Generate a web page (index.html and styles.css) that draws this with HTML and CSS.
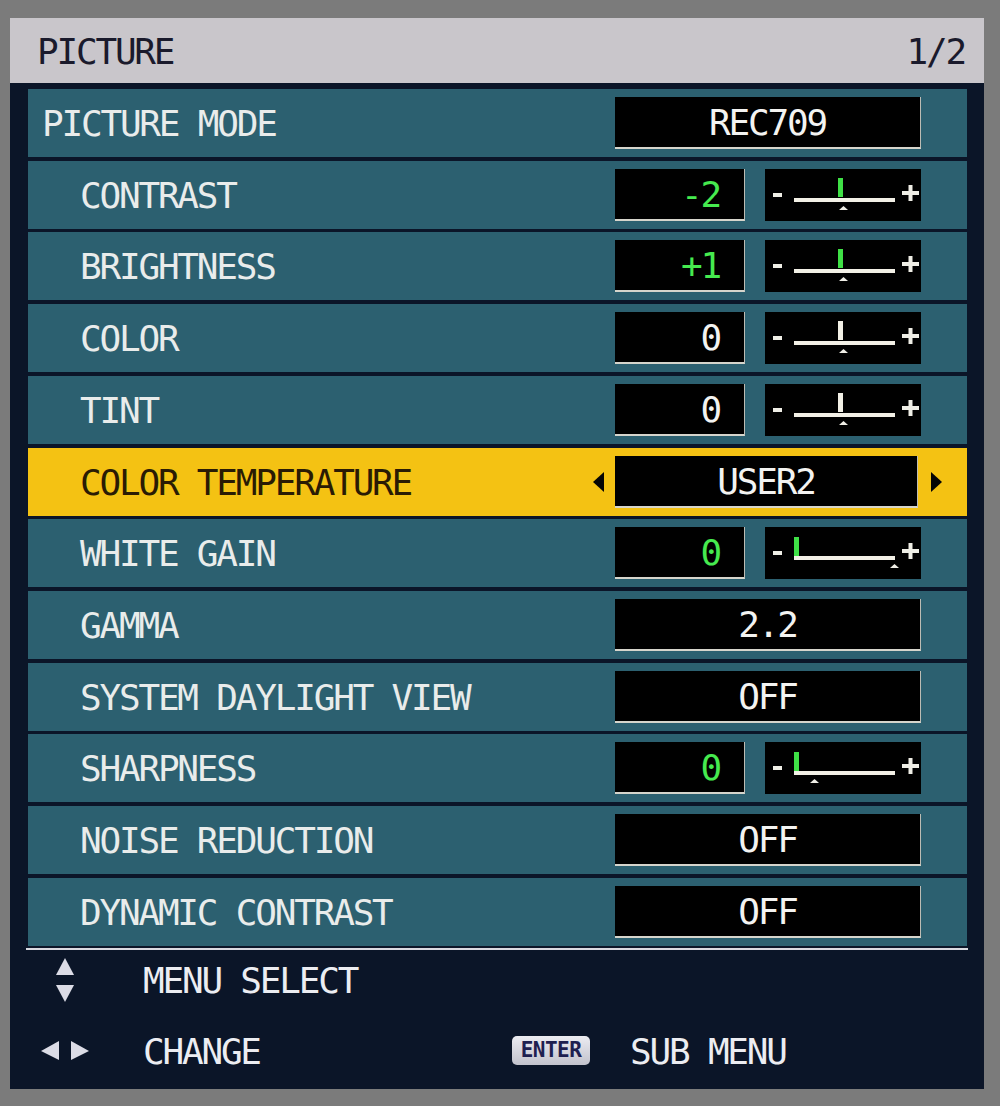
FILE: index.html
```html
<!DOCTYPE html>
<html lang="en">
<head>
<meta charset="utf-8">
<title>PICTURE</title>
<link rel="stylesheet" href="styles.css">
</head>
<body>
<div class="osd">
  <header class="osd-head">
    <span class="head-title">PICTURE</span>
    <span class="head-page">1/2</span>
  </header>
  <div class="osd-body">
    <ul class="rows">
      <li class="row row-top">
        <span class="label">PICTURE MODE</span>
        <div class="ctrl"><div class="box box-wide">REC709</div></div>
      </li>
      <li class="row">
        <span class="label">CONTRAST</span>
        <div class="ctrl">
          <div class="box box-num green">-2</div>
          <div class="slider"><svg viewBox="0 0 156 52" width="156" height="52"><rect x="8" y="24" width="9" height="4" fill="#efeee6"/><rect x="29" y="29" width="101" height="4" fill="#f2f0e6"/><rect x="137" y="22" width="17" height="4" fill="#efeee6"/><rect x="143.5" y="16" width="4" height="16" fill="#efeee6"/><rect x="73" y="9" width="5" height="19" fill="#3fe046"/><polygon points="74,41 83,41 78.5,37" fill="#efeee6"/></svg></div>
        </div>
      </li>
      <li class="row">
        <span class="label">BRIGHTNESS</span>
        <div class="ctrl">
          <div class="box box-num green">+1</div>
          <div class="slider"><svg viewBox="0 0 156 52" width="156" height="52"><rect x="8" y="24" width="9" height="4" fill="#efeee6"/><rect x="29" y="29" width="101" height="4" fill="#f2f0e6"/><rect x="137" y="22" width="17" height="4" fill="#efeee6"/><rect x="143.5" y="16" width="4" height="16" fill="#efeee6"/><rect x="73" y="9" width="5" height="19" fill="#3fe046"/><polygon points="74,41 83,41 78.5,37" fill="#efeee6"/></svg></div>
        </div>
      </li>
      <li class="row">
        <span class="label">COLOR</span>
        <div class="ctrl">
          <div class="box box-num">0</div>
          <div class="slider"><svg viewBox="0 0 156 52" width="156" height="52"><rect x="8" y="24" width="9" height="4" fill="#efeee6"/><rect x="29" y="29" width="101" height="4" fill="#f2f0e6"/><rect x="137" y="22" width="17" height="4" fill="#efeee6"/><rect x="143.5" y="16" width="4" height="16" fill="#efeee6"/><rect x="73" y="9" width="5" height="19" fill="#f2f0e6"/><polygon points="74,41 83,41 78.5,37" fill="#efeee6"/></svg></div>
        </div>
      </li>
      <li class="row">
        <span class="label">TINT</span>
        <div class="ctrl">
          <div class="box box-num">0</div>
          <div class="slider"><svg viewBox="0 0 156 52" width="156" height="52"><rect x="8" y="24" width="9" height="4" fill="#efeee6"/><rect x="29" y="29" width="101" height="4" fill="#f2f0e6"/><rect x="137" y="22" width="17" height="4" fill="#efeee6"/><rect x="143.5" y="16" width="4" height="16" fill="#efeee6"/><rect x="73" y="9" width="5" height="19" fill="#f2f0e6"/><polygon points="74,41 83,41 78.5,37" fill="#efeee6"/></svg></div>
        </div>
      </li>
      <li class="row row-sel">
        <span class="label">COLOR TEMPERATURE</span>
        <div class="ctrl ctrl-sel">
          <svg class="arrow" viewBox="0 0 12 20" width="12" height="20"><polygon points="12,0 12,20 1,10" fill="#050505"/></svg>
          <div class="box box-sel">USER2</div>
          <svg class="arrow" viewBox="0 0 12 20" width="12" height="20"><polygon points="0,0 0,20 11,10" fill="#050505"/></svg>
        </div>
      </li>
      <li class="row">
        <span class="label">WHITE GAIN</span>
        <div class="ctrl">
          <div class="box box-num green">0</div>
          <div class="slider"><svg viewBox="0 0 156 52" width="156" height="52"><rect x="8" y="24" width="9" height="4" fill="#efeee6"/><rect x="29" y="29" width="101" height="4" fill="#f2f0e6"/><rect x="137" y="22" width="17" height="4" fill="#efeee6"/><rect x="143.5" y="16" width="4" height="16" fill="#efeee6"/><rect x="29" y="10" width="5" height="19" fill="#3fe046"/><polygon points="125,41 134,41 129.5,37" fill="#efeee6"/></svg></div>
        </div>
      </li>
      <li class="row">
        <span class="label">GAMMA</span>
        <div class="ctrl"><div class="box box-wide">2.2</div></div>
      </li>
      <li class="row">
        <span class="label">SYSTEM DAYLIGHT VIEW</span>
        <div class="ctrl"><div class="box box-wide">OFF</div></div>
      </li>
      <li class="row">
        <span class="label">SHARPNESS</span>
        <div class="ctrl">
          <div class="box box-num green">0</div>
          <div class="slider"><svg viewBox="0 0 156 52" width="156" height="52"><rect x="8" y="24" width="9" height="4" fill="#efeee6"/><rect x="29" y="29" width="101" height="4" fill="#f2f0e6"/><rect x="137" y="22" width="17" height="4" fill="#efeee6"/><rect x="143.5" y="16" width="4" height="16" fill="#efeee6"/><rect x="29" y="10" width="5" height="19" fill="#3fe046"/><polygon points="45,41 54,41 49.5,37" fill="#efeee6"/></svg></div>
        </div>
      </li>
      <li class="row">
        <span class="label">NOISE REDUCTION</span>
        <div class="ctrl"><div class="box box-wide">OFF</div></div>
      </li>
      <li class="row">
        <span class="label">DYNAMIC CONTRAST</span>
        <div class="ctrl"><div class="box box-wide">OFF</div></div>
      </li>
    </ul>
    <footer class="foot">
      <div class="foot-row foot-row-1">
        <div class="foot-icon">
          <svg viewBox="0 0 20 44" width="20" height="44"><polygon points="10,0 19,17 1,17" fill="#dcdce6"/><polygon points="1,27 19,27 10,44" fill="#dcdce6"/></svg>
        </div>
        <span class="foot-text">MENU SELECT</span>
      </div>
      <div class="foot-row foot-row-2">
        <div class="foot-icon">
          <svg viewBox="0 0 48 20" width="48" height="20"><polygon points="0,10 18,0 18,19" fill="#dcdce6"/><polygon points="30,0 48,10 30,19" fill="#dcdce6"/></svg>
        </div>
        <span class="foot-text foot-change">CHANGE</span>
        <span class="enter">ENTER</span>
        <span class="foot-text foot-sub">SUB MENU</span>
      </div>
    </footer>
  </div>
</div>
</body>
</html>
```
FILE: styles.css
```css
* { box-sizing: border-box; }

html, body {
  margin: 0;
  padding: 0;
}

body {
  width: 1000px;
  height: 1106px;
  overflow: hidden;
  background: #7b7b7b;
  font-family: "DejaVu Sans Mono", "Liberation Mono", monospace;
  font-size: 36px;
  letter-spacing: -2.2px;
}

.osd {
  margin: 18px 0 0 10px;
  width: 974px;
}

.osd-head {
  height: 65px;
  background: #c9c6cb;
  color: #1a1a2c;
  display: flex;
  align-items: center;
  justify-content: space-between;
  padding: 2px 19px 0 27px;
  line-height: 1;
}

.osd-body {
  height: 1006px;
  background: #0b1528;
  padding: 6px 17px 0 18px;
}

.rows {
  list-style: none;
  margin: 0;
  padding: 0;
  display: grid;
  grid-template-rows: repeat(12, 68px);
  row-gap: 3.73px;
}

.row {
  display: flex;
  align-items: center;
  background: #2c6070;
  color: #e9eceb;
  padding-left: 52px;
  line-height: 1;
}

.row-top { padding-left: 14px; }

.row-sel {
  background: #f4c213;
  color: #2a1b04;
}

.label {
  flex: 1;
  white-space: pre;
  padding-top: 2px;
}

.ctrl {
  display: flex;
  align-items: center;
  gap: 20px;
  margin-right: 46px;
}

.ctrl-sel {
  gap: 0;
  margin-right: 24px;
}

.ctrl-sel .arrow:first-child { margin-right: 11px; }
.ctrl-sel .arrow:last-child { margin-left: 13px; }

.box {
  height: 52px;
  background: #000;
  color: #f3f3f1;
  border-bottom: 2px solid #d6d5cc;
  border-right: 1px solid #bdbcb4;
  display: flex;
  align-items: center;
  padding-top: 2px;
}

.box-wide {
  width: 306px;
  justify-content: center;
}

.box-sel {
  width: 303px;
  justify-content: center;
}

.box-num {
  width: 130px;
  justify-content: flex-end;
  padding-right: 24px;
}

.green { color: #46ea4f; }

.slider {
  width: 156px;
  height: 52px;
  background: #000;
  display: flex;
}

.slider svg { display: block; }

.foot {
  margin: 2px -1px 0 -2px;
  border-top: 2px solid #d9d9e0;
  color: #ecedf2;
}

.foot-row {
  display: flex;
  align-items: center;
  line-height: 1;
}

.foot-row-1 { height: 60px; }

.foot-row-2 {
  height: 72px;
  margin-top: 5px;
}

.foot-icon {
  width: 78px;
  display: flex;
  justify-content: center;
}

.foot-icon svg { display: block; }

.foot-text {
  margin-left: 39px;
  padding-top: 2px;
}

.foot-change {
  width: 369px;
}

.foot-sub {
  margin-left: 40px;
}

.enter {
  width: 78px;
  height: 29px;
  border-radius: 5px;
  background: linear-gradient(#ececf2, #c2c2cc);
  color: #1e2050;
  font-size: 21px;
  font-weight: bold;
  letter-spacing: -0.5px;
  display: flex;
  align-items: center;
  justify-content: center;
}
```
